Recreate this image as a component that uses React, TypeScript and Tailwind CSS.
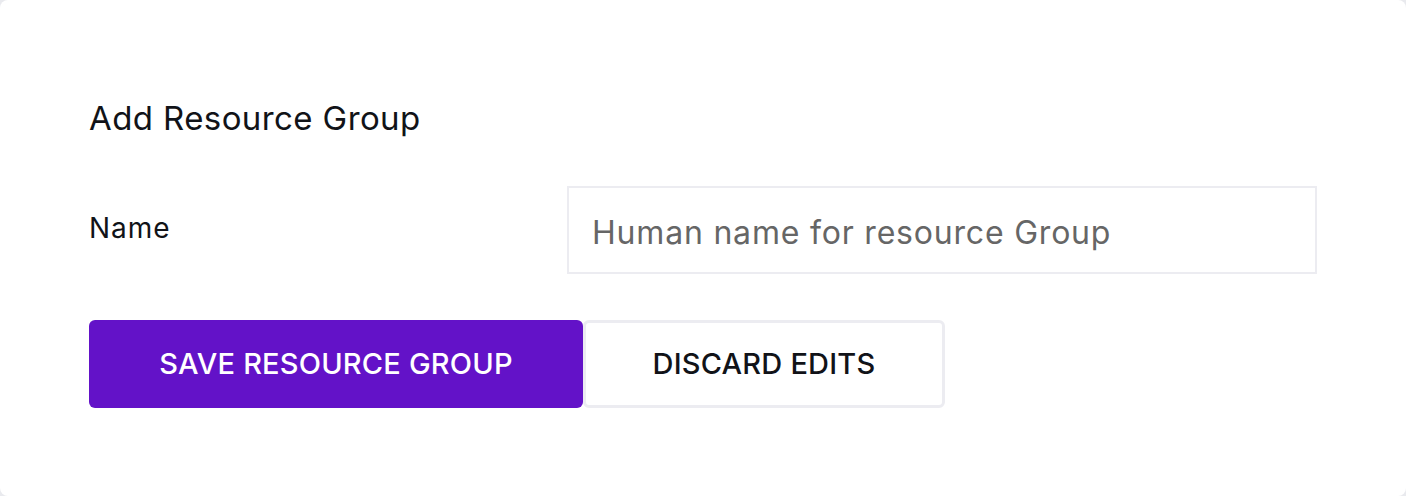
export default function App() {
  return (
    <div className="w-[1406px] h-[496px] bg-[#e9eaee] font-['Inter',sans-serif] text-[#111318]">
      <div className="h-full rounded-lg bg-white px-[89px] pt-[100px]">
        <h1 className="text-[33px] leading-[36px] font-normal tracking-[0.4px]">Add Resource Group</h1>
        <div className="mt-[50px] flex items-center">
          <label htmlFor="name" className="w-[478px] text-[28px] leading-[32px] tracking-[1px] -mt-[4px]">
            Name
          </label>
          <input
            id="name"
            className="h-[88px] w-[750px] border-2 border-[#ececf1] bg-white px-[23px] pt-[4px] text-[32px] tracking-[0.8px] text-[#111318] outline-none placeholder:text-[#666666]"
            placeholder="Human name for resource Group"
          />
        </div>
        <div className="mt-[46px] flex">
          <button className="h-[88px] w-[494px] rounded-md bg-[#6312c8] text-[29px] font-medium text-white tracking-[0.2px]">
            SAVE RESOURCE GROUP
          </button>
          <button className="h-[88px] w-[362px] rounded-md border-[3px] border-[#ececf1] bg-white text-[29px] font-medium text-[#111318] tracking-[0.2px]">
            DISCARD EDITS
          </button>
        </div>
      </div>
    </div>
  )
}
